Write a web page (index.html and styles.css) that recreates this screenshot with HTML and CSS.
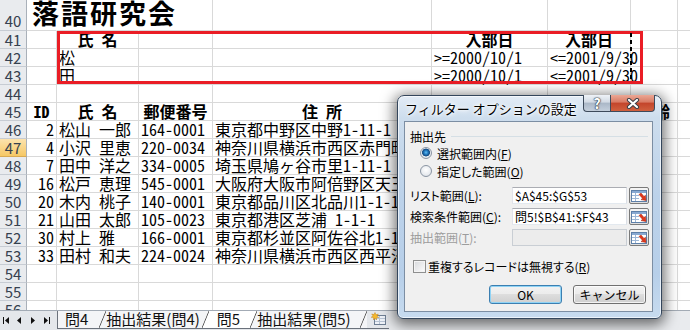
FILE: index.html
```html
<!DOCTYPE html>
<html lang="ja">
<head>
  <meta charset="UTF-8" />
  <title>フィルター オプションの設定</title>
  <link rel="stylesheet" href="styles.css">
</head>
<body>
<div class="excel">
  <div class="sheet">
    <div class="row tall"><div class="rh">40</div><div class="c ca ov title">落語研究会</div><div class="c cb ov"></div><div class="c cc"></div><div class="c cd"></div><div class="c ce"></div><div class="c cf"></div><div class="c cg"></div><div class="c ch"></div></div>
    <div class="row"><div class="rh">41</div><div class="c ca"></div><div class="c cb hd">氏　名</div><div class="c cc"></div><div class="c cd"></div><div class="c ce hd">入部日</div><div class="c cf hd">入部日</div><div class="c cg"></div><div class="c ch"></div></div>
    <div class="row"><div class="rh">42</div><div class="c ca"></div><div class="c cb">松</div><div class="c cc"></div><div class="c cd"></div><div class="c ce">&gt;=2000/10/1</div><div class="c cf">&lt;=2001/9/30</div><div class="c cg"></div><div class="c ch"></div></div>
    <div class="row"><div class="rh">43</div><div class="c ca"></div><div class="c cb">田</div><div class="c cc"></div><div class="c cd"></div><div class="c ce">&gt;=2000/10/1</div><div class="c cf">&lt;=2001/9/30</div><div class="c cg"></div><div class="c ch"></div></div>
    <div class="row"><div class="rh">44</div><div class="c ca"></div><div class="c cb"></div><div class="c cc"></div><div class="c cd"></div><div class="c ce"></div><div class="c cf"></div><div class="c cg"></div><div class="c ch"></div></div>
    <div class="row"><div class="rh">45</div><div class="c ca hd">ID</div><div class="c cb hd">氏　名</div><div class="c cc hd">郵便番号</div><div class="c cd hd">住　所</div><div class="c ce"></div><div class="c cf"></div><div class="c cg hd">年齢</div><div class="c ch"></div></div>
    <div class="row"><div class="rh">46</div><div class="c ca num">2</div><div class="c cb">松山　一郎</div><div class="c cc">164-0001</div><div class="c cd">東京都中野区中野1-11-1</div><div class="c ce"></div><div class="c cf"></div><div class="c cg"></div><div class="c ch"></div></div>
    <div class="row"><div class="rh on">47</div><div class="c ca num">4</div><div class="c cb">小沢　里恵</div><div class="c cc">220-0034</div><div class="c cd">神奈川県横浜市西区赤門町</div><div class="c ce"></div><div class="c cf"></div><div class="c cg"></div><div class="c ch"></div></div>
    <div class="row"><div class="rh">48</div><div class="c ca num">7</div><div class="c cb">田中　洋之</div><div class="c cc">334-0005</div><div class="c cd">埼玉県鳩ヶ谷市里1-11-1</div><div class="c ce"></div><div class="c cf"></div><div class="c cg"></div><div class="c ch"></div></div>
    <div class="row"><div class="rh">49</div><div class="c ca num">16</div><div class="c cb">松戸　恵理</div><div class="c cc">545-0001</div><div class="c cd">大阪府大阪市阿倍野区天王</div><div class="c ce"></div><div class="c cf"></div><div class="c cg"></div><div class="c ch"></div></div>
    <div class="row"><div class="rh">50</div><div class="c ca num">20</div><div class="c cb">木内　桃子</div><div class="c cc">140-0001</div><div class="c cd">東京都品川区北品川1-1-1</div><div class="c ce"></div><div class="c cf"></div><div class="c cg"></div><div class="c ch"></div></div>
    <div class="row"><div class="rh">51</div><div class="c ca num">21</div><div class="c cb">山田　太郎</div><div class="c cc">105-0023</div><div class="c cd">東京都港区芝浦 1-1-1</div><div class="c ce"></div><div class="c cf"></div><div class="c cg"></div><div class="c ch"></div></div>
    <div class="row"><div class="rh">52</div><div class="c ca num">30</div><div class="c cb">村上　雅</div><div class="c cc">166-0001</div><div class="c cd">東京都杉並区阿佐谷北1-1-1</div><div class="c ce"></div><div class="c cf"></div><div class="c cg"></div><div class="c ch"></div></div>
    <div class="row"><div class="rh">53</div><div class="c ca num">33</div><div class="c cb">田村　和夫</div><div class="c cc">224-0024</div><div class="c cd">神奈川県横浜市西区西平沼</div><div class="c ce"></div><div class="c cf"></div><div class="c cg"></div><div class="c ch"></div></div>
    <div class="row"><div class="rh">54</div><div class="c ca"></div><div class="c cb"></div><div class="c cc"></div><div class="c cd"></div><div class="c ce"></div><div class="c cf"></div><div class="c cg"></div><div class="c ch"></div></div>
    <div class="row"><div class="rh">55</div><div class="c ca"></div><div class="c cb"></div><div class="c cc"></div><div class="c cd"></div><div class="c ce"></div><div class="c cf"></div><div class="c cg"></div><div class="c ch"></div></div>
    <div class="row"><div class="rh">56</div><div class="c ca"></div><div class="c cb"></div><div class="c cc"></div><div class="c cd"></div><div class="c ce"></div><div class="c cf"></div><div class="c cg"></div><div class="c ch"></div></div>

    <!-- criteria range marker -->
    <div class="crit-box"></div>
    <div class="ants"></div>
  </div>

  <div class="tabbar">
    <div class="nav">
      <svg width="57" height="18" viewBox="0 0 57 18">
        <g fill="#111">
          <rect x="3" y="6" width="1" height="7"/>
          <path d="M9 6v7L5 9.5z"/>
          <path d="M21 6v7l-4-3.5z"/>
          <path d="M31 6v7l4-3.5z"/>
          <path d="M44 6v7l4-3.5z"/>
          <rect x="49" y="6" width="1" height="7"/>
        </g>
      </svg>
    </div>
    <div class="tabs">
      <span class="tab first">問4</span>
      <span class="sl"></span>
      <span class="tab wide">抽出結果(問4)</span>
      <span class="sl to-on"></span>
      <span class="tab on">問5</span>
      <span class="sl from-on"></span>
      <span class="tab wide last">抽出結果(問5)</span>
      <span class="sl"></span>
      <span class="newsheet">
        <svg width="16" height="14" viewBox="0 0 16 14">
          <rect x="3.5" y="3.5" width="11" height="9" fill="#eef2f8" stroke="#6f7f94"/>
          <path d="M4 6.5h10M4 9.5h10M8.5 4v8" stroke="#b8c4d4"/>
          <path d="M4 0.5l1 2.2 2.3-.6-1.4 1.9 1.9 1.4-2.4.2.1 2.4L4 6.3 2.5 7.9l.1-2.4L.2 5.3l1.9-1.4L.7 2l2.3.6z" fill="#f6b92b" stroke="#c7861a" stroke-width=".5"/>
        </svg>
      </span>
    </div>
    <div class="hscroll"></div>
  </div>

  <div class="dialog">
    <div class="titlebar">
      <span class="ttl">フィルター オプションの設定</span>
      <div class="caps">
        <span class="cap help">?</span>
        <span class="cap close">
          <svg width="16" height="11" viewBox="0 0 16 11">
            <path d="M4 2l8 7M12 2l-8 7" stroke="#3a3f47" stroke-width="4.2" stroke-linecap="round"/>
            <path d="M4 2l8 7M12 2l-8 7" stroke="#fff" stroke-width="2.2" stroke-linecap="round"/>
          </svg>
        </span>
      </div>
    </div>

    <div class="client">
      <div class="grp"><span>抽出先</span><span class="gline"></span></div>
      <div class="opt"><span class="rb on"></span><span>選択範囲内(<u>F</u>)</span></div>
      <div class="opt"><span class="rb"></span><span>指定した範囲(<u>O</u>)</span></div>

      <div class="ranges">
        <span class="lbl">リスト範囲(<u>L</u>):</span>
        <span class="inp">$A$45:$G$53</span>
        <span class="ref"><svg width="16" height="12" viewBox="0 0 16 12"><rect x=".5" y=".5" width="15" height="11" fill="#fff" stroke="#5d7fa8"/><rect x="1" y="1" width="14" height="2" fill="#88a9d2"/><path d="M1 5.5h7M1 8.5h7M4.5 3v8" stroke="#9db7d7"/><path d="M8 4.5l2-1.5 3 3.5 1.5-1.2.5 5.2-5-.9 1.5-1.3z" fill="#e2381c" stroke="#9c1f0c" stroke-width=".5"/></svg></span>

        <span class="lbl">検索条件範囲(<u>C</u>):</span>
        <span class="inp">問5!$B$41:$F$43</span>
        <span class="ref"><svg width="16" height="12" viewBox="0 0 16 12"><rect x=".5" y=".5" width="15" height="11" fill="#fff" stroke="#5d7fa8"/><rect x="1" y="1" width="14" height="2" fill="#88a9d2"/><path d="M1 5.5h7M1 8.5h7M4.5 3v8" stroke="#9db7d7"/><path d="M8 4.5l2-1.5 3 3.5 1.5-1.2.5 5.2-5-.9 1.5-1.3z" fill="#e2381c" stroke="#9c1f0c" stroke-width=".5"/></svg></span>

        <span class="lbl dis">抽出範囲(<u>T</u>):</span>
        <span class="inp off"></span>
        <span class="ref"><svg width="16" height="12" viewBox="0 0 16 12"><rect x=".5" y=".5" width="15" height="11" fill="#fff" stroke="#5d7fa8"/><rect x="1" y="1" width="14" height="2" fill="#88a9d2"/><path d="M1 5.5h7M1 8.5h7M4.5 3v8" stroke="#9db7d7"/><path d="M8 4.5l2-1.5 3 3.5 1.5-1.2.5 5.2-5-.9 1.5-1.3z" fill="#e2381c" stroke="#9c1f0c" stroke-width=".5"/></svg></span>
      </div>

      <div class="chk"><span class="box"></span><span>重複するレコードは無視する(<u>R</u>)</span></div>

      <div class="btns">
        <span class="btn def">OK</span>
        <span class="btn">キャンセル</span>
      </div>
    </div>
  </div>
</div>
</body>
</html>
```

FILE: styles.css
```css
body {
  margin: 0;
  width: 690px;
  height: 330px;
  overflow: hidden;
  background: #fff;
  font-family: 'Noto Sans CJK JP', sans-serif;
  color: #000;
}

.excel {
  position: relative;
  width: 690px;
  height: 330px;
  display: flex;
  flex-direction: column;
}

/* ---------- sheet grid ---------- */

.sheet {
  position: relative;
  flex: none;
  height: 310px;
  overflow: hidden;
}

.row {
  display: flex;
  height: 18px;
}

.row.tall {
  height: 31px;
}

.rh {
  flex: none;
  width: 27px;
  box-sizing: border-box;
  background: #e9ebee;
  border-right: 1px solid #a9b0b9;
  border-bottom: 1px solid #c7ccd3;
  color: #36414f;
  font-size: 15px;
  line-height: 17px;
  text-align: center;
}

.tall .rh {
  padding-top: 12px;
  line-height: 18px;
}

.rh.on {
  background: linear-gradient(#fce3ae, #f6c865);
  border-bottom-color: #d9aa52;
}

.c {
  flex: none;
  box-sizing: border-box;
  border-right: 1px solid #d9d9d9;
  border-bottom: 1px solid #d9d9d9;
  padding: 0 2px;
  font-size: 16px;
  line-height: 17px;
  white-space: nowrap;
  font-feature-settings: "hwid" 1;
}

.ca { width: 30px; }
.cb { width: 82px; }
.cc { width: 74px; }
.cd { width: 219px; }
.ce { width: 116px; }
.cf { width: 83px; }
.cg { width: 47px; }
.ch { width: 60px; }

.ov { border-right-color: transparent; }
.num { text-align: right; }

.hd {
  font-weight: 700;
  text-align: center;
}

.title {
  font-size: 27px;
  font-weight: 700;
  letter-spacing: 2px;
  line-height: 26px;
  padding-left: 5px;
}

.crit-box {
  position: absolute;
  left: 57px;
  top: 31px;
  width: 586px;
  height: 53px;
  box-sizing: border-box;
  border: 3px solid #ea1d25;
}

.ants {
  position: absolute;
  left: 630px;
  top: 33px;
  width: 2px;
  height: 49px;
  background: repeating-linear-gradient(#000 0 4px, transparent 4px 7px);
}

/* ---------- sheet tabs ---------- */

.tabbar {
  flex: none;
  height: 20px;
  box-sizing: border-box;
  border-top: 1px solid #a3abb5;
  background: #e4e7eb;
  display: flex;
  font-size: 15px;
}

.nav {
  width: 57px;
  flex: none;
}

.nav svg { display: block; }

.tabs {
  display: flex;
  height: 17px;
  border-bottom: 1px solid #6a717b;
  border-left: 1px solid #6a717b;
  background: #f4f5f7;
}

.tab {
  line-height: 16px;
  color: #111;
  white-space: nowrap;
}

.tab.first { padding: 0 11px 0 7px; }
.tab.wide { padding: 0 2px 0 0; }
.tab.last { padding-right: 9px; }
.tab.on { background: #fff; padding: 0 10px 0 8px; }

.sl {
  width: 7px;
  background: linear-gradient(to bottom right, transparent calc(50% - .8px), #555 50%, transparent calc(50% + .8px));
}

.sl.to-on {
  background: linear-gradient(to bottom right, transparent calc(50% - .8px), #555 50%, #fff calc(50% + .8px));
}

.sl.from-on {
  background: linear-gradient(to bottom right, #fff calc(50% - .8px), #555 50%, transparent calc(50% + .8px));
}

.newsheet {
  padding: 1px 2px 0 4px;
  background: #e4e7eb;
}

.newsheet svg { display: block; }

.hscroll {
  flex: 1;
  background: #e9ebee;
}

/* ---------- dialog ---------- */

.dialog {
  position: absolute;
  left: 397px;
  top: 95px;
  width: 265px;
  height: 224px;
  box-sizing: border-box;
  padding: 0 8px 6px 6px;
  border: 1px solid #34465c;
  border-radius: 7px 7px 6px 6px;
  background: linear-gradient(#e3ecf6 0, #cddded 22px, #bcd2ea 45%, #b7cfe9 80%, #c7dbef 100%);
  box-shadow: 0 3px 14px 3px rgba(0, 0, 0, 0.55), inset 0 0 0 1px rgba(255, 255, 255, 0.65);
  display: flex;
  flex-direction: column;
  font-size: 12px;
}

.titlebar {
  height: 25px;
  flex: none;
  display: flex;
  align-items: flex-start;
}

.ttl {
  margin: 5px 0 0 1px;
  line-height: 15px;
  font-size: 13px;
  white-space: nowrap;
  text-shadow: 0 0 6px #fff, 0 0 4px #fff, 0 0 2px #fff;
}

.caps {
  margin: -1px -2px 0 auto;
  display: flex;
}

.cap {
  height: 17px;
  box-sizing: border-box;
  border: 1px solid #3d4a5b;
  border-top: none;
  display: flex;
  align-items: center;
  justify-content: center;
}

.help {
  width: 27px;
  border-right: none;
  border-radius: 0 0 0 4px;
  background: linear-gradient(#eef2f7, #d2dae4 45%, #aab7c7 50%, #c4cfdc 100%);
  color: #fff;
  font-weight: 700;
  font-size: 14px;
  line-height: 16px;
  text-shadow: 0 0 1px #2c3440, 0 0 1px #2c3440, 0 0 2px #2c3440;
}

.close {
  width: 45px;
  border-radius: 0 0 4px 0;
  background: linear-gradient(#eba795, #d87a63 45%, #c3442b 50%, #d0603f 100%);
}

.close svg { display: block; }

.client {
  flex: 1;
  background: #f0f0f0;
  border: 1px solid #7c8ea3;
  display: flex;
  flex-direction: column;
  font-feature-settings: "palt" 1;
}

.grp {
  display: flex;
  align-items: center;
  height: 15px;
  margin: 7px 4px 0 5px;
}

.gline {
  flex: 1;
  height: 1px;
  margin-left: 5px;
  background: #d5dfe5;
}

.opt {
  display: flex;
  align-items: center;
  height: 18px;
  margin-left: 15px;
}

.opt:first-of-type { margin-top: 2px; }

.rb {
  width: 12px;
  height: 12px;
  margin-right: 5px;
  box-sizing: border-box;
  border: 1px solid #8a95a3;
  border-radius: 50%;
  background: radial-gradient(circle at 50% 40%, #fff 0, #e9ecf0 60%, #d5dae1 100%);
}

.rb.on {
  background: radial-gradient(circle at 50% 45%, #63c0f2 0, #2b86cc 1.6px, #144f8a 3.3px, #2a5e8f 3.8px, #e9ecf0 4.2px, #d5dae1 100%);
}

.ranges {
  display: grid;
  grid-template-columns: 100px 115px 20px;
  grid-auto-rows: 17px;
  column-gap: 2px;
  row-gap: 4px;
  margin: 7px 0 0 5px;
  align-items: center;
}

.lbl { white-space: nowrap; }
.lbl.dis { color: #9d9d9d; }

.inp {
  height: 17px;
  box-sizing: border-box;
  border: 1px solid #abadb3;
  border-left-color: #e2e3ea;
  border-right-color: #dbdfe6;
  border-bottom-color: #e3e9ef;
  background: #fff;
  padding-left: 2px;
  line-height: 15px;
  white-space: nowrap;
}

.inp.off {
  background: #ececec;
  border-color: #c9ced4;
}

.ref {
  height: 17px;
  box-sizing: border-box;
  border: 1px solid #7a7a7a;
  border-radius: 2px;
  background: linear-gradient(#f4f4f4 50%, #dfdfdf 50%);
  display: flex;
  align-items: center;
  justify-content: center;
}

.ref svg { display: block; }

.chk {
  display: flex;
  align-items: center;
  height: 18px;
  margin: 11px 0 0 8px;
}

.box {
  width: 13px;
  height: 13px;
  margin-right: 2px;
  box-sizing: border-box;
  border: 1px solid #8e8f8f;
  background: linear-gradient(135deg, #d7d9dc, #fdfdfd);
  box-shadow: inset 0 0 0 1px #f4f4f4;
}

.btns {
  display: flex;
  justify-content: flex-end;
  gap: 11px;
  margin-top: 10px;
  padding-right: 6px;
}

.btn {
  width: 73px;
  height: 19px;
  box-sizing: border-box;
  border: 1px solid #707070;
  border-radius: 3px;
  background: linear-gradient(#f2f2f2 0, #ebebeb 50%, #dddddd 50%, #cfcfcf 100%);
  box-shadow: inset 0 0 0 1px rgba(255, 255, 255, 0.75);
  text-align: center;
  line-height: 17px;
  font-feature-settings: normal;
}

.btn.def {
  border-color: #3c7fb1;
  box-shadow: inset 0 0 0 1px #8fd3f5;
}
```
